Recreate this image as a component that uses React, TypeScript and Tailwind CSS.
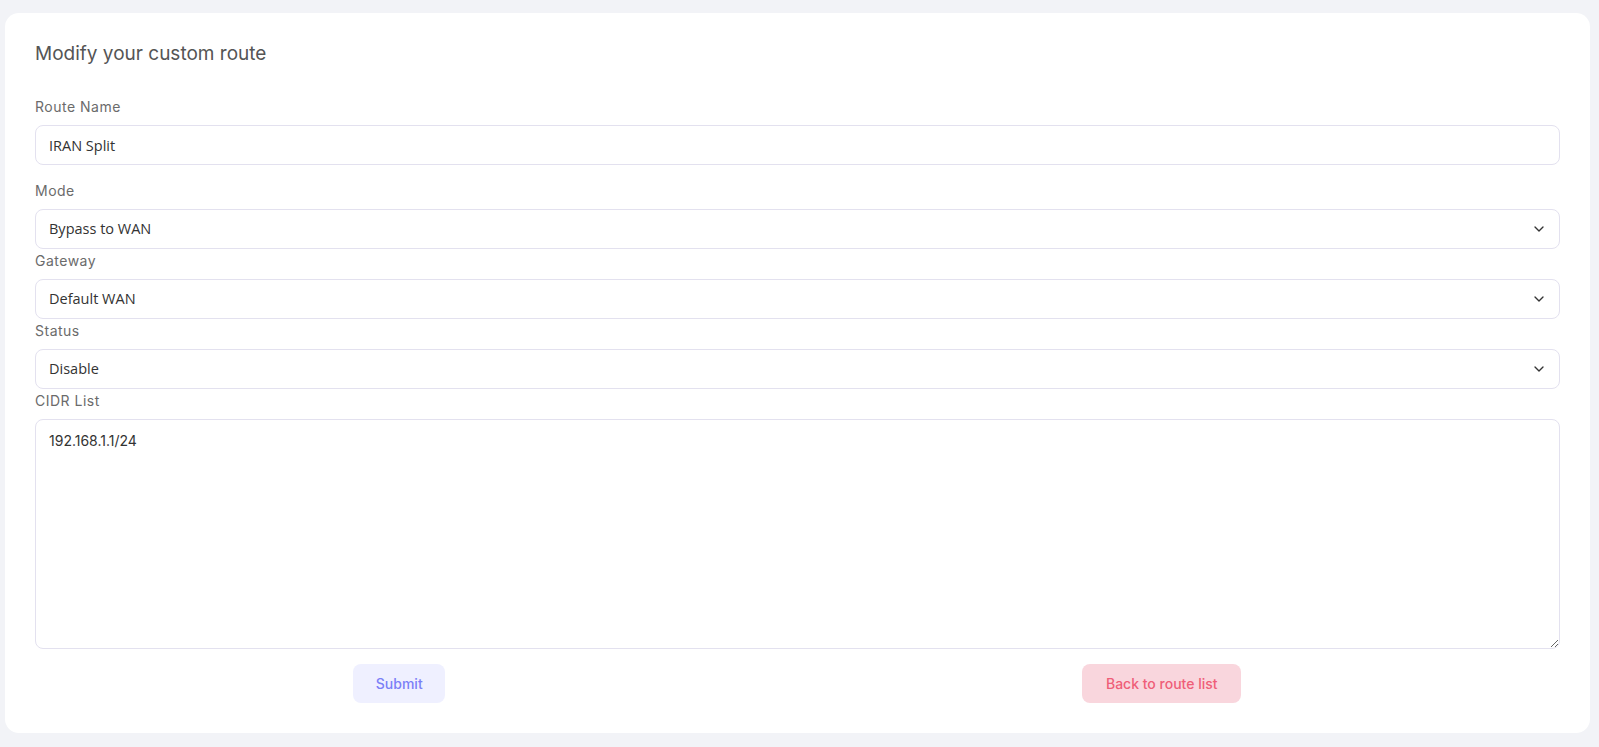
import { ChevronDown } from "lucide-react";

const labelCls = "block text-[14px] tracking-[0.5px] leading-6 text-[#6b6b6b] mb-[6px]";
const boxCls =
    "w-full h-10 rounded-lg border border-[#e3e1ef] bg-white px-[13px] text-[14.5px] text-[#333] outline-none";

const SelectField = ({ label, value }: { label: string; value: string }) => {
    return (
        <div>
            <label className={labelCls}>{label}</label>
            <div className={boxCls + " flex items-center justify-between"}>
                <span className="font-['Open_Sans',sans-serif]">{value}</span>
                <ChevronDown size={16} strokeWidth={2} className="text-[#333] -mr-[1px]" />
            </div>
        </div>
    );
};

const App = () => {
    return (
        <div className="min-h-screen bg-[#f2f3f7] pl-[5px] pr-[9px] pt-[13px] pb-[14px] font-['Inter',sans-serif]">
            <div className="bg-white rounded-[14px] px-[30px] pt-[29px] pb-[30px]">
                <h2 className="text-[19px] leading-6 text-[#555] mb-[29px]">Modify your custom route</h2>

                <div className="mb-[14px]">
                    <label className={labelCls}>Route Name</label>
                    <input
                        className={boxCls + " font-['Open_Sans',sans-serif]"}
                        defaultValue="IRAN Split"
                    />
                </div>

                <div className="flex flex-col">
                    <SelectField label="Mode" value="Bypass to WAN" />
                    <SelectField label="Gateway" value="Default WAN" />
                    <SelectField label="Status" value="Disable" />
                    <div>
                        <label className={labelCls}>CIDR List</label>
                        <textarea
                            className="block w-full h-[230px] rounded-lg border border-[#e3e1ef] bg-white px-[13px] py-[10px] text-[14px] text-[#333] outline-none resize-y"
                            defaultValue="192.168.1.1/24"
                        />
                    </div>
                </div>

                <div className="flex mt-[15px]">
                    <div className="flex-1 flex justify-center pr-[34px]">
                        <button className="h-[39px] w-[92px] rounded-lg bg-[#eff0ff] text-[14px] font-medium text-[#7b7ff7]">
                            Submit
                        </button>
                    </div>
                    <div className="flex-1 flex justify-center pr-[34px]">
                        <button className="h-[39px] w-[159px] rounded-lg bg-[#f9d6dd] text-[14px] font-medium text-[#ef5e78]">
                            Back to route list
                        </button>
                    </div>
                </div>
            </div>
        </div>
    );
};

export default App;
